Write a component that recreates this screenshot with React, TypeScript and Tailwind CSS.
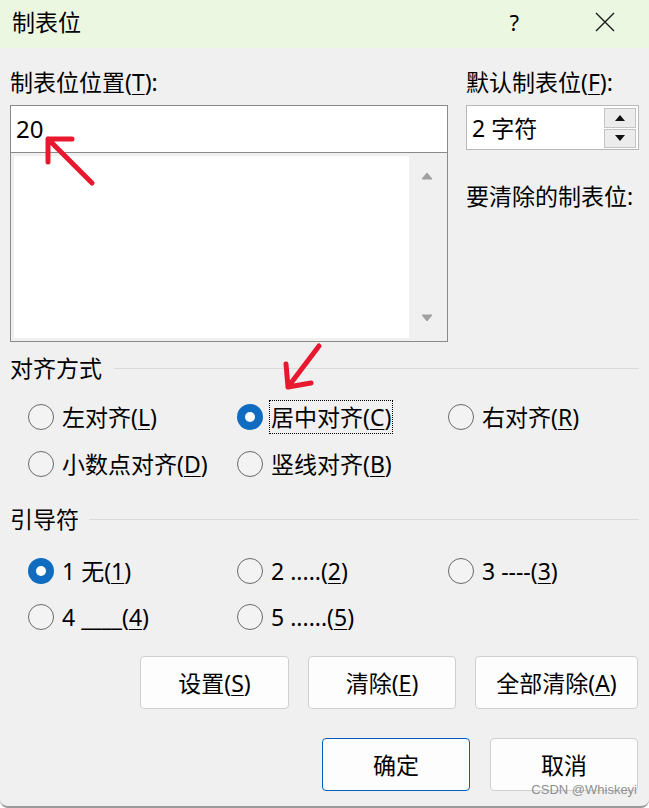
function Key({ k }: { k: string }) {
  return <span className="underline decoration-1 underline-offset-[3px]">{k}</span>;
}

interface RadioProps {
  checked?: boolean;
  focus?: boolean;
  children: React.ReactNode;
}

function Radio({ checked, focus, children }: RadioProps) {
  return (
    <div className="flex items-center h-[34px]">
      {checked ? (
        <span className="w-[26px] h-[26px] rounded-full bg-[#0f6cc0] flex items-center justify-center shrink-0">
          <span className="w-[10px] h-[10px] rounded-full bg-white" />
        </span>
      ) : (
        <span className="w-[26px] h-[26px] rounded-full border-[1.5px] border-[#6a6a6a] bg-[#f3f3f3] shrink-0" />
      )}
      <span
        className={
          focus
            ? "ml-[6px] px-[1px] h-[34px] flex items-center border border-dotted border-black whitespace-nowrap"
            : "ml-[6px] px-[1px] h-[34px] flex items-center border border-dotted border-transparent whitespace-nowrap"
        }
      >
        {children}
      </span>
    </div>
  );
}

function Button({ children, w, primary }: { children: React.ReactNode; w: string; primary?: boolean }) {
  return (
    <div
      className={
        primary
          ? `${w} h-[53px] rounded-[4px] border border-[#005fb8] bg-[#fdfdfd] flex items-center justify-center`
          : `${w} h-[53px] rounded-[4px] border border-[#d0d0d0] bg-[#fdfdfd] flex items-center justify-center`
      }
    >
      {children}
    </div>
  );
}

export default function App() {
  return (
    <div className="relative w-[649px] h-[808px] bg-[#f0f0f0] text-[23px] leading-[26px] text-black font-['Noto_Sans','Noto_Sans_CJK_SC',sans-serif] overflow-hidden rounded-b-[8px] border-b-2 border-[#9a9a9a]">
      {/* title bar */}
      <div className="h-[48px] bg-[#ecf7e1] flex items-center pl-[12px] pb-[4px]">
        <span>制表位</span>
        <span className="ml-auto mr-[76px] text-[22px]">?</span>
        <svg width="20" height="20" viewBox="0 0 20 20" className="mr-[34px]">
          <path d="M1 1 L19 19 M19 1 L1 19" stroke="#1a1a1a" strokeWidth="1.4" fill="none" />
        </svg>
      </div>

      <div className="pl-[10px] pr-[10px]">
        {/* top part */}
        <div className="flex pt-[21px]">
          <div className="w-[438px]">
            <div className="h-[26px] whitespace-nowrap">
              制表位位置(<Key k="T" />):
            </div>
            <div className="mt-[10px] h-[48px] border border-[#8a8a8a] bg-white flex items-center pl-[5px] text-[24px]">
              20
            </div>
            <div className="h-[189px] border-x border-b border-[#8a8a8a] bg-[#f0f0f0] p-[3px] flex">
              <div className="flex-1 bg-white" />
              <div className="w-[35px] flex flex-col items-center justify-between py-[16px]">
                <svg width="12" height="8" viewBox="0 0 12 8">
                  <path d="M6 1 L11 7 L1 7 Z" fill="#a0a0a0" stroke="#a0a0a0" strokeLinejoin="round" />
                </svg>
                <svg width="12" height="8" viewBox="0 0 12 8">
                  <path d="M1 1 L11 1 L6 7 Z" fill="#a0a0a0" stroke="#a0a0a0" strokeLinejoin="round" />
                </svg>
              </div>
            </div>
          </div>

          <div className="ml-[18px] w-[173px]">
            <div className="h-[26px] whitespace-nowrap">
              默认制表位(<Key k="F" />):
            </div>
            <div className="mt-[10px] h-[45px] border border-[#b8b8b8] bg-white flex items-center pl-[5px]">
              <span>2 字符</span>
              <div className="ml-auto mr-[2px] flex flex-col gap-[1px]">
                <div className="w-[32px] h-[20px] border border-[#c4c4c4] bg-[#ececec] flex items-center justify-center">
                  <svg width="10" height="6" viewBox="0 0 10 6">
                    <path d="M5 0 L10 6 L0 6 Z" fill="#111" />
                  </svg>
                </div>
                <div className="w-[32px] h-[19px] border border-[#c4c4c4] bg-[#ececec] flex items-center justify-center">
                  <svg width="10" height="6" viewBox="0 0 10 6">
                    <path d="M0 0 L10 0 L5 6 Z" fill="#111" />
                  </svg>
                </div>
              </div>
            </div>
            <div className="mt-[33px] h-[26px] whitespace-nowrap">要清除的制表位:</div>
          </div>
        </div>

        {/* alignment */}
        <div className="mt-[13px] flex items-center h-[26px]">
          <span>对齐方式</span>
          <div className="flex-1 ml-[12px] h-px bg-[#dadada]" />
        </div>
        <div className="mt-[19px] pl-[18px] grid grid-cols-[209px_211px_1fr] gap-y-[13px]">
          <Radio>
            左对齐(<Key k="L" />)
          </Radio>
          <Radio checked focus>
            居中对齐(<Key k="C" />)
          </Radio>
          <Radio>
            右对齐(<Key k="R" />)
          </Radio>
          <Radio>
            小数点对齐(<Key k="D" />)
          </Radio>
          <Radio>
            竖线对齐(<Key k="B" />)
          </Radio>
        </div>

        {/* leader */}
        <div className="mt-[25px] flex items-center h-[26px]">
          <span>引导符</span>
          <div className="flex-1 ml-[10px] h-px bg-[#dadada]" />
        </div>
        <div className="mt-[22px] pl-[18px] grid grid-cols-[209px_211px_1fr] gap-y-[12px]">
          <Radio checked>
            1 无(<Key k="1" />)
          </Radio>
          <Radio>
            2 .....(<Key k="2" />)
          </Radio>
          <Radio>
            3 ----(<Key k="3" />)
          </Radio>
          <Radio>
            4 ____(<Key k="4" />)
          </Radio>
          <Radio>
            5 ......(<Key k="5" />)
          </Radio>
        </div>

        {/* buttons */}
        <div className="mt-[22px] flex justify-end gap-[19px] pr-[1px]">
          <Button w="w-[149px]">
            设置(<Key k="S" />)
          </Button>
          <Button w="w-[148px]">
            清除(<Key k="E" />)
          </Button>
          <Button w="w-[163px]">
            全部清除(<Key k="A" />)
          </Button>
        </div>
        <div className="mt-[29px] flex justify-end gap-[20px] pr-[1px]">
          <Button w="w-[148px]" primary>
            确定
          </Button>
          <Button w="w-[148px]">取消</Button>
        </div>
      </div>

      {/* watermark */}
      <div className="absolute right-[12px] bottom-[9px] text-[13px] leading-[14px] text-[#8f8f8f] font-['Liberation_Sans',sans-serif]">
        CSDN @Whiskeyi
      </div>

      {/* red annotation arrows */}
      <svg className="absolute left-0 top-0 pointer-events-none" width="649" height="808" viewBox="0 0 649 808">
        <g stroke="#e8192f" strokeWidth="5" strokeLinecap="round" strokeLinejoin="round" fill="none">
          <path d="M92 183 L48 139 M48 139 L72 139 M48 139 L48 162" />
          <path d="M319 346 L288 387 M288 387 L286 364 M288 387 L311 383" />
        </g>
      </svg>
    </div>
  );
}
